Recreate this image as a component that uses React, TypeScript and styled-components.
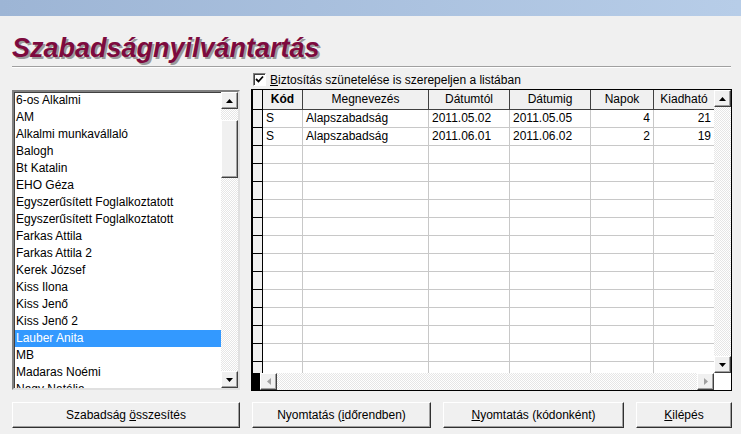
import React from 'react'
import styled, { createGlobalStyle, css } from 'styled-components'

const GlobalStyle = createGlobalStyle`
  html, body {
    margin: 0;
    padding: 0;
    background: #f0f0f0;
    font-family: "Liberation Sans", Arial, sans-serif;
    font-size: 12px;
    color: #000;
  }
  * { box-sizing: border-box; }
`

const dither = css`
  background: repeating-conic-gradient(#ffffff 0 25%, #e6e6e6 0 50%) 0 0 / 2px 2px;
`

const raised = css`
  background: #f0f0f0;
  border: 1px solid;
  border-color: #ffffff #404040 #404040 #ffffff;
  box-shadow: inset -1px -1px 0 #a0a0a0;
`

const Page = styled.div`
  width: 741px;
  height: 434px;
  display: flex;
  flex-direction: column;
  overflow: hidden;
`

const TopBar = styled.div`
  height: 16px;
  flex: none;
  background: linear-gradient(90deg, #9db5d5, #b7cde8);
`

const Title = styled.h1`
  margin: 16px 0 0;
  padding-left: 12px;
  height: 32px;
  line-height: 32px;
  font-size: 27px;
  font-weight: bold;
  font-style: italic;
  color: #7d0a3e;
  text-shadow: 2px 2px 0 #9a9a9a;
`

const Divider = styled.div`
  margin: 2px 10px 0 12px;
  height: 2px;
  border-top: 1px solid #a0a0a0;
  border-bottom: 1px solid #ffffff;
`

const Main = styled.div`
  display: grid;
  grid-template-columns: 228px 481px;
  column-gap: 11px;
  padding: 0 9px 0 12px;
`

const ListBox = styled.div`
  margin-top: 22px;
  height: 300px;
  display: grid;
  grid-template-columns: 1fr 17px;
  border: 2px solid;
  border-color: #808080 #e0e0e0 #e0e0e0 #808080;
  background: #fff;
  box-shadow: inset 1px 1px 0 #404040;
`

const Items = styled.div`
  overflow: hidden;
  padding: 0 0 0 1px;
`

const Item = styled.div<{ $selected?: boolean }>`
  height: 17px;
  line-height: 17px;
  padding-left: 1px;
  white-space: nowrap;
  ${p => p.$selected && css`
    background: #3399ff;
    color: #fff;
  `}
`

const VScroll = styled.div`
  display: flex;
  flex-direction: column;
  ${dither}
`

const HScroll = styled.div`
  display: flex;
  ${dither}
`

const ScrollBtn = styled.div`
  ${raised}
  width: 17px;
  height: 17px;
  flex: none;
  display: flex;
  align-items: center;
  justify-content: center;
`

const Thumb = styled.div<{ $top: number; $height: number }>`
  ${raised}
  margin-top: ${p => p.$top}px;
  height: ${p => p.$height}px;
  flex: none;
`

const Spacer = styled.div`
  flex: 1;
`

const RightCol = styled.div`
  display: flex;
  flex-direction: column;
`

const CheckRow = styled.label`
  height: 21px;
  display: flex;
  align-items: center;
  gap: 4px;
  padding-left: 2px;
  padding-top: 2px;
`

const CheckBox = styled.span`
  width: 13px;
  height: 13px;
  background: #fff;
  border: 1px solid;
  border-color: #808080 #fff #fff #808080;
  box-shadow: inset 1px 1px 0 #404040;
  display: flex;
  align-items: center;
  justify-content: center;
`

const U = styled.span`
  text-decoration: underline;
`

const GridFrame = styled.div`
  height: 302px;
  border: 1px solid #000;
  border-left-width: 2px;
  display: grid;
  grid-template-columns: 461px 17px;
  grid-template-rows: 1fr 17px;
  background: #fff;
`

const TableArea = styled.div`
  overflow: hidden;
`

const cols = '10px 40px 126px 81px 81px 63px 61px'

const Row = styled.div<{ $head?: boolean }>`
  display: grid;
  grid-template-columns: ${cols};
  height: ${p => (p.$head ? 20 : 18)}px;
`

const Cell = styled.div<{ $align?: 'left' | 'center' | 'right'; $head?: boolean; $bold?: boolean }>`
  border-right: 1px solid ${p => (p.$head ? '#404040' : '#c8c8c8')};
  border-bottom: 1px solid ${p => (p.$head ? '#404040' : '#c8c8c8')};
  background: ${p => (p.$head ? '#f0f0f0' : '#fff')};
  padding: 0 3px;
  line-height: ${p => (p.$head ? 19 : 17)}px;
  text-align: ${p => p.$align || 'left'};
  font-weight: ${p => (p.$bold ? 'bold' : 'normal')};
  white-space: nowrap;
  overflow: hidden;
`

const Indicator = styled.div`
  background: #f0f0f0;
  border-right: 1px solid #000;
  border-bottom: 1px solid #000;
`

const BlackBlock = styled.div`
  width: 7px;
  background: #000;
  flex: none;
`

const Corner = styled.div`
  background: #fff;
`

const Buttons = styled.div`
  display: grid;
  grid-template-columns: 228px 179px 181px 96px;
  column-gap: 12px;
  padding: 0 9px 0 12px;
  margin-top: 11px;
`

const Button = styled.button`
  height: 26px;
  background: #f0f0f0;
  border: 1px solid;
  border-color: #ffffff #303030 #303030 #ffffff;
  box-shadow: inset -1px -1px 0 #a0a0a0;
  font-family: "Liberation Sans", Arial, sans-serif;
  font-size: 12px;
  color: #000;
  padding: 0;
`

const Arrow = ({ dir, disabled }: { dir: 'up' | 'down' | 'left' | 'right'; disabled?: boolean }) => {
  const pts = {
    up: '0,4 7,4 3.5,0',
    down: '0,0 7,0 3.5,4',
    left: '4,0 4,7 0,3.5',
    right: '0,0 0,7 4,3.5',
  }[dir]
  const vertical = dir === 'up' || dir === 'down'
  return (
    <svg width={vertical ? 7 : 4} height={vertical ? 4 : 7} viewBox={vertical ? '0 0 7 4' : '0 0 4 7'}>
      <polygon points={pts} fill={disabled ? '#a0a0a0' : '#000'} />
    </svg>
  )
}

const names = [
  '6-os Alkalmi',
  'AM',
  'Alkalmi munkavállaló',
  'Balogh',
  'Bt Katalin',
  'EHO Géza',
  'Egyszerűsített Foglalkoztatott',
  'Egyszerűsített Foglalkoztatott',
  'Farkas Attila',
  'Farkas Attila 2',
  'Kerek József',
  'Kiss Ilona',
  'Kiss Jenő',
  'Kiss Jenő 2',
  'Lauber Anita',
  'MB',
  'Madaras Noémi',
  'Nagy Natália',
]

const rows = [
  ['S', 'Alapszabadság', '2011.05.02', '2011.05.05', '4', '21'],
  ['S', 'Alapszabadság', '2011.06.01', '2011.06.02', '2', '19'],
]

const headers: { t: string; bold?: boolean }[] = [
  { t: 'Kód', bold: true },
  { t: 'Megnevezés' },
  { t: 'Dátumtól' },
  { t: 'Dátumig' },
  { t: 'Napok' },
  { t: 'Kiadható' },
]

export default function App() {
  const body = Array.from({ length: 15 }, (_, i) => rows[i] || ['', '', '', '', '', ''])
  return (
    <Page>
      <GlobalStyle />
      <TopBar />
      <Title>Szabadságnyilvántartás</Title>
      <Divider />
      <Main>
        <ListBox>
          <Items>
            {names.map((n, i) => (
              <Item key={i} $selected={n === 'Lauber Anita'}>{n}</Item>
            ))}
          </Items>
          <VScroll>
            <ScrollBtn><Arrow dir="up" /></ScrollBtn>
            <Thumb $top={11} $height={58} />
            <Spacer />
            <ScrollBtn><Arrow dir="down" /></ScrollBtn>
          </VScroll>
        </ListBox>
        <RightCol>
          <CheckRow>
            <CheckBox>
              <svg width="9" height="9" viewBox="0 0 9 9">
                <path d="M1 4 L3.5 6.5 L8 1.5" stroke="#000" strokeWidth="1.8" fill="none" />
              </svg>
            </CheckBox>
            <span><U>B</U>iztosítás szünetelése is szerepeljen a listában</span>
          </CheckRow>
          <GridFrame>
            <TableArea>
              <Row $head>
                <Indicator />
                {headers.map(h => (
                  <Cell key={h.t} $head $align="center" $bold={h.bold}>{h.t}</Cell>
                ))}
              </Row>
              {body.map((r, i) => (
                <Row key={i}>
                  <Indicator />
                  <Cell>{r[0]}</Cell>
                  <Cell>{r[1]}</Cell>
                  <Cell>{r[2]}</Cell>
                  <Cell>{r[3]}</Cell>
                  <Cell $align="right">{r[4]}</Cell>
                  <Cell $align="right">{r[5]}</Cell>
                </Row>
              ))}
            </TableArea>
            <VScroll>
              <ScrollBtn><Arrow dir="up" /></ScrollBtn>
              <Spacer />
              <ScrollBtn><Arrow dir="down" /></ScrollBtn>
            </VScroll>
            <HScroll>
              <BlackBlock />
              <ScrollBtn><Arrow dir="left" disabled /></ScrollBtn>
              <Spacer />
              <ScrollBtn><Arrow dir="right" disabled /></ScrollBtn>
            </HScroll>
            <Corner />
          </GridFrame>
        </RightCol>
      </Main>
      <Buttons>
        <Button>Szabadság <U>ö</U>sszesítés</Button>
        <Button>Nyomtatás (<U>i</U>dőrendben)</Button>
        <Button><U>N</U>yomtatás (kódonként)</Button>
        <Button><U>K</U>ilépés</Button>
      </Buttons>
    </Page>
  )
}
